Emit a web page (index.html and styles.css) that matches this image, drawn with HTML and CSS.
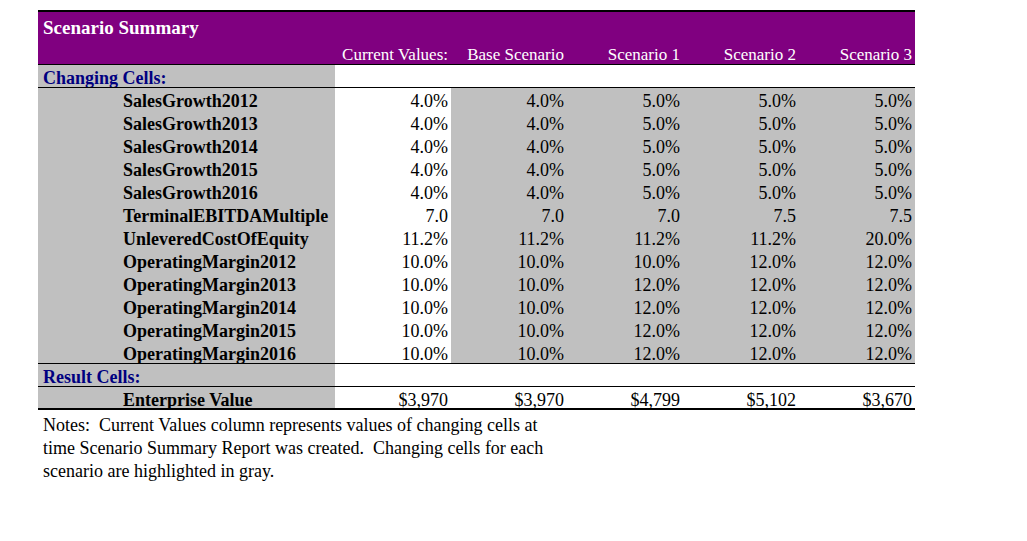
FILE: index.html
```html
<!DOCTYPE html>
<html>
<head>
<meta charset="utf-8">
<link rel="stylesheet" href="styles.css">
</head>
<body>
<div class="sheet">
<table class="summary">
  <colgroup>
    <col class="c-label"><col class="c-num"><col class="c-num"><col class="c-num"><col class="c-num"><col class="c-last">
  </colgroup>
  <tr class="title-row"><td colspan="6" class="title">Scenario Summary</td></tr>
  <tr class="head-row">
    <td class="hd"></td>
    <td class="hd num">Current Values:</td>
    <td class="hd num">Base Scenario</td>
    <td class="hd num">Scenario 1</td>
    <td class="hd num">Scenario 2</td>
    <td class="hd num">Scenario 3</td>
  </tr>
  <tr class="section-row">
    <td class="section">Changing Cells:</td><td></td><td></td><td></td><td></td><td></td>
  </tr>
  <tr class="data"><td class="name">SalesGrowth2012</td><td class="num cur">4.0%</td><td class="num sc">4.0%</td><td class="num sc">5.0%</td><td class="num sc">5.0%</td><td class="num sc">5.0%</td></tr>
  <tr class="data"><td class="name">SalesGrowth2013</td><td class="num cur">4.0%</td><td class="num sc">4.0%</td><td class="num sc">5.0%</td><td class="num sc">5.0%</td><td class="num sc">5.0%</td></tr>
  <tr class="data"><td class="name">SalesGrowth2014</td><td class="num cur">4.0%</td><td class="num sc">4.0%</td><td class="num sc">5.0%</td><td class="num sc">5.0%</td><td class="num sc">5.0%</td></tr>
  <tr class="data"><td class="name">SalesGrowth2015</td><td class="num cur">4.0%</td><td class="num sc">4.0%</td><td class="num sc">5.0%</td><td class="num sc">5.0%</td><td class="num sc">5.0%</td></tr>
  <tr class="data"><td class="name">SalesGrowth2016</td><td class="num cur">4.0%</td><td class="num sc">4.0%</td><td class="num sc">5.0%</td><td class="num sc">5.0%</td><td class="num sc">5.0%</td></tr>
  <tr class="data"><td class="name">TerminalEBITDAMultiple</td><td class="num cur">7.0</td><td class="num sc">7.0</td><td class="num sc">7.0</td><td class="num sc">7.5</td><td class="num sc">7.5</td></tr>
  <tr class="data"><td class="name">UnleveredCostOfEquity</td><td class="num cur">11.2%</td><td class="num sc">11.2%</td><td class="num sc">11.2%</td><td class="num sc">11.2%</td><td class="num sc">20.0%</td></tr>
  <tr class="data"><td class="name">OperatingMargin2012</td><td class="num cur">10.0%</td><td class="num sc">10.0%</td><td class="num sc">10.0%</td><td class="num sc">12.0%</td><td class="num sc">12.0%</td></tr>
  <tr class="data"><td class="name">OperatingMargin2013</td><td class="num cur">10.0%</td><td class="num sc">10.0%</td><td class="num sc">12.0%</td><td class="num sc">12.0%</td><td class="num sc">12.0%</td></tr>
  <tr class="data"><td class="name">OperatingMargin2014</td><td class="num cur">10.0%</td><td class="num sc">10.0%</td><td class="num sc">12.0%</td><td class="num sc">12.0%</td><td class="num sc">12.0%</td></tr>
  <tr class="data"><td class="name">OperatingMargin2015</td><td class="num cur">10.0%</td><td class="num sc">10.0%</td><td class="num sc">12.0%</td><td class="num sc">12.0%</td><td class="num sc">12.0%</td></tr>
  <tr class="data last"><td class="name">OperatingMargin2016</td><td class="num cur">10.0%</td><td class="num sc">10.0%</td><td class="num sc">12.0%</td><td class="num sc">12.0%</td><td class="num sc">12.0%</td></tr>
  <tr class="section-row result">
    <td class="section">Result Cells:</td><td></td><td></td><td></td><td></td><td></td>
  </tr>
  <tr class="total">
    <td class="name">Enterprise Value</td><td class="num">$3,970</td><td class="num">$3,970</td><td class="num">$4,799</td><td class="num">$5,102</td><td class="num">$3,670</td>
  </tr>
</table>
<p class="notes">Notes:&nbsp; Current Values column represents values of changing cells at time Scenario Summary Report was created.&nbsp; Changing cells for each scenario are highlighted in gray.</p>
</div>
</body>
</html>
```

FILE: styles.css
```css
html, body {
  margin: 0;
  padding: 0;
  background: #ffffff;
}

body {
  font-family: "Liberation Serif", "Times New Roman", serif;
  font-size: 18px;
  color: #000000;
}

.sheet {
  padding: 10px 0 0 38px;
}

.summary {
  border-collapse: separate;
  border-spacing: 0;
  table-layout: fixed;
  width: 877px;
}

.c-label { width: 297px; }
.c-num { width: 116px; }
.c-last { width: 116px; }

.summary td {
  padding: 4px 0 0 0;
  white-space: nowrap;
  line-height: 19px;
  overflow: hidden;
}

.summary td.title {
  background: #800080;
  color: #ffffff;
  font-weight: bold;
  font-size: 19px;
  line-height: 28px;
  padding: 2px 0 0 5px;
  border-top: 2px solid #000000;
}

.summary .head-row td {
  background: #800080;
  color: #ffffff;
  font-size: 17px;
  padding-top: 3px;
  line-height: 19px;
  border-bottom: 1px solid #000000;
}

.summary td.num {
  text-align: right;
  padding-right: 3px;
}

.summary .section-row td {
  line-height: 18px;
  border-bottom: 1px solid #000000;
  background: #ffffff;
}

.summary .section-row td.section {
  background: #c0c0c0;
  color: #000080;
  font-weight: bold;
  padding-left: 5px;
}

.summary td.name {
  background: #c0c0c0;
  font-weight: bold;
  padding-left: 85px;
}

.cur {
  background: #ffffff;
}

.sc {
  background: #c0c0c0;
}

.summary .data.last td {
  line-height: 18px;
  border-bottom: 1px solid #000000;
}

.summary .total td {
  padding-top: 5px;
  line-height: 16px;
  border-bottom: 2px solid #000000;
}

.notes {
  margin: 4px 0 0 0;
  width: 527px;
  padding-left: 5px;
  box-sizing: border-box;
  line-height: 23px;
}
```
